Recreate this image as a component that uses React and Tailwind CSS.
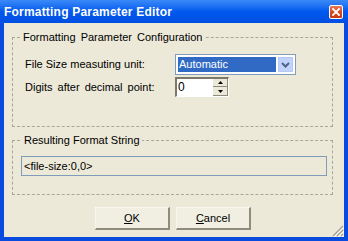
import React from 'react';

const font = { fontFamily: '"Liberation Sans", Arial, sans-serif' };

const CloseButton = () => (
  <div className="w-[14px] h-[14px] rounded-[2px] border border-white bg-gradient-to-b from-[#E8785A] via-[#D84A22] to-[#C63A14] flex items-center justify-center">
    <svg width="8" height="8" viewBox="0 0 8 8">
      <path d="M1 1 L7 7 M7 1 L1 7" stroke="white" strokeWidth="1.8" strokeLinecap="square" />
    </svg>
  </div>
);

const SizeGrip = () => (
  <svg width="12" height="12" viewBox="0 0 12 12" className="absolute right-0 bottom-0">
    <path d="M11 1 L1 11 M11 5 L5 11 M11 9 L9 11" stroke="#A09E8E" strokeWidth="1.2" />
    <path d="M12 2 L2 12 M12 6 L6 12 M12 10 L10 12" stroke="#FFFFFF" strokeWidth="1" />
  </svg>
);

const XpButton = ({ children }) => (
  <button className="w-[75px] h-[23px] bg-[#F1EFE2] border-t border-l border-dotted border-t-white border-l-white border-r-2 border-b-2 border-r-[#8E8C7E] border-b-[#8E8C7E] [border-right-style:solid] [border-bottom-style:solid] text-[11px] text-black">
    {children}
  </button>
);

export default function App() {
  return (
    <div style={font} className="w-[348px] h-[241px] bg-[#0A4BDF] flex flex-col text-[11px] text-black">
      {/* Title bar */}
      <div className="h-[23px] flex items-center justify-between pl-[4px] pr-[5px] bg-gradient-to-b from-[#3A8AF7] via-[#0058EE] to-[#0050E2]">
        <span className="text-white font-bold text-[12px] tracking-[0.2px]">Formatting Parameter Editor</span>
        <CloseButton />
      </div>

      {/* Body */}
      <div className="relative flex-1 mx-[4px] mb-[4px] bg-[#ECE9D8] pt-[8px] pl-[8px] pr-[11px] flex flex-col">
        <fieldset className="border border-dashed border-[#A9A795] pl-[12px] pb-[29px]">
          <legend className="ml-[-4px] px-[2px] leading-[13px] [word-spacing:2px]">Formatting Parameter Configuration</legend>
          <div className="flex items-center mt-[10px] h-[21px]">
            <span className="w-[150px]">File Size measuting unit:</span>
            <div className="w-[121px] h-[21px] border border-[#7F9DB9] bg-white p-[2px] flex gap-[2px]">
              <div className="flex-1 bg-[#316AC5] text-white pl-[1px] leading-[15px]">Automatic</div>
              <div className="w-[15px] bg-[#C1D3FB] border border-[#B4C8F6] flex items-center justify-center">
                <svg width="9" height="6" viewBox="0 0 9 6">
                  <path d="M1 1 L4.5 4.5 L8 1" stroke="#4D6185" strokeWidth="2" fill="none" />
                </svg>
              </div>
            </div>
          </div>
          <div className="flex items-center mt-[2px] h-[20px]">
            <span className="w-[150px] [word-spacing:2px]">Digits after decimal point:</span>
            <div className="w-[54px] h-[20px] border-t-2 border-l-2 border-t-[#7A786B] border-l-[#7A786B] border-b border-r border-b-white border-r-white bg-white flex">
              <div className="flex-1 pl-[1px] leading-[16px] text-[12px]">0</div>
              <div className="w-[15px] flex flex-col">
                <div className="h-[8px] bg-[#ECE9D8] border-b border-r border-[#8E8C7E] flex items-center justify-center">
                  <svg width="5" height="3" viewBox="0 0 5 3"><path d="M2.5 0 L5 3 L0 3 Z" fill="black" /></svg>
                </div>
                <div className="h-[9px] bg-[#ECE9D8] border-b border-r border-[#8E8C7E] flex items-center justify-center">
                  <svg width="5" height="3" viewBox="0 0 5 3"><path d="M0 0 L5 0 L2.5 3 Z" fill="black" /></svg>
                </div>
              </div>
            </div>
          </div>
        </fieldset>

        <fieldset className="mt-[7px] border border-dashed border-[#A9A795] pl-[8px] pr-[5px] pb-[18px]">
          <legend className="ml-[1px] px-[2px] leading-[13px]">Resulting Format String</legend>
          <div className="mt-[9px] h-[20px] border border-[#7F9DB9] pl-[2px] leading-[18px]">&lt;file-size:0,0&gt;</div>
        </fieldset>

        <div className="flex justify-center gap-[6px] mt-[12px] pl-[1px]">
          <XpButton><span className="underline">O</span>K</XpButton>
          <XpButton><span className="underline">C</span>ancel</XpButton>
        </div>

        <SizeGrip />
      </div>
    </div>
  );
}
